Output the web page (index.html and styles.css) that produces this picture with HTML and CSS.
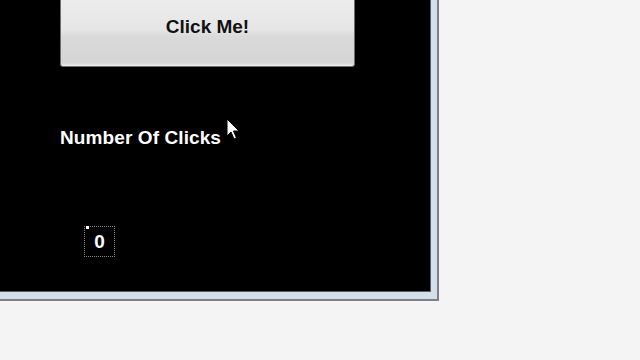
FILE: index.html
```html
<!DOCTYPE html>
<html lang="en">
<head>
    <meta charset="UTF-8">
    <meta name="viewport" content="width=device-width, initial-scale=1.0">
    <title>Click Counter</title>
    <link rel="stylesheet" href="styles.css">
</head>
<body>
    <div class="window">
        <div class="frame">
            <div class="form">
                <button class="btn" id="clickMe">Click Me!</button>
                <div class="label">Number Of Clicks</div>
                <div class="count" id="count">0</div>
            </div>
        </div>
    </div>
    <svg class="cursor" width="14" height="24" viewBox="0 0 14 24">
        <path d="M1 1 L1 18 L5 14 L8 21 L10.5 20 L7.5 13 L13 13 Z" fill="#fff" stroke="#000" stroke-width="1"/>
    </svg>
</body>
</html>
```

FILE: styles.css
```css
body {
    margin: 0;
    background: #f4f4f4;
    font-family: "Liberation Sans", Arial, sans-serif;
    width: 640px;
    height: 360px;
    overflow: hidden;
    position: relative;
}

.window {
    width: 437px;
    height: 299px;
    border-right: 2px solid #7d8086;
    border-bottom: 2px solid #7d8086;
    background: #d5dfe8;
}

.frame {
    width: 430px;
    height: 291px;
    background: #000;
    border-right: 1px solid #5a5f66;
    border-bottom: 1px solid #5a5f66;
}

.form {
    padding-left: 60px;
}

.btn {
    display: block;
    width: 295px;
    height: 67px;
    border: 1px solid #6e6e6e;
    border-top: none;
    border-radius: 0 0 3px 3px;
    background: linear-gradient(#ececec 0%, #e6e6e6 45%, #dadada 55%, #d4d4d4 95%, #efefef 100%);
    font-family: "Liberation Sans", Arial, sans-serif;
    font-size: 19px;
    font-weight: bold;
    color: #111;
    padding: 0 0 12px 0;
}

.label {
    margin-top: 60px;
    color: #fff;
    font-size: 19px;
    font-weight: bold;
    letter-spacing: 0.1px;
}

.count {
    margin: 77px 0 0 24px;
    width: 29px;
    height: 29px;
    border: 1px dotted #8a8a8a;
    color: #fff;
    font-size: 19px;
    font-weight: bold;
    text-align: center;
    line-height: 30px;
    position: relative;
}

.count::before {
    content: "";
    position: absolute;
    left: 1px;
    top: -1px;
    width: 3px;
    height: 3px;
    background: #fff;
}

.cursor {
    position: absolute;
    left: 226px;
    top: 118px;
}
```
